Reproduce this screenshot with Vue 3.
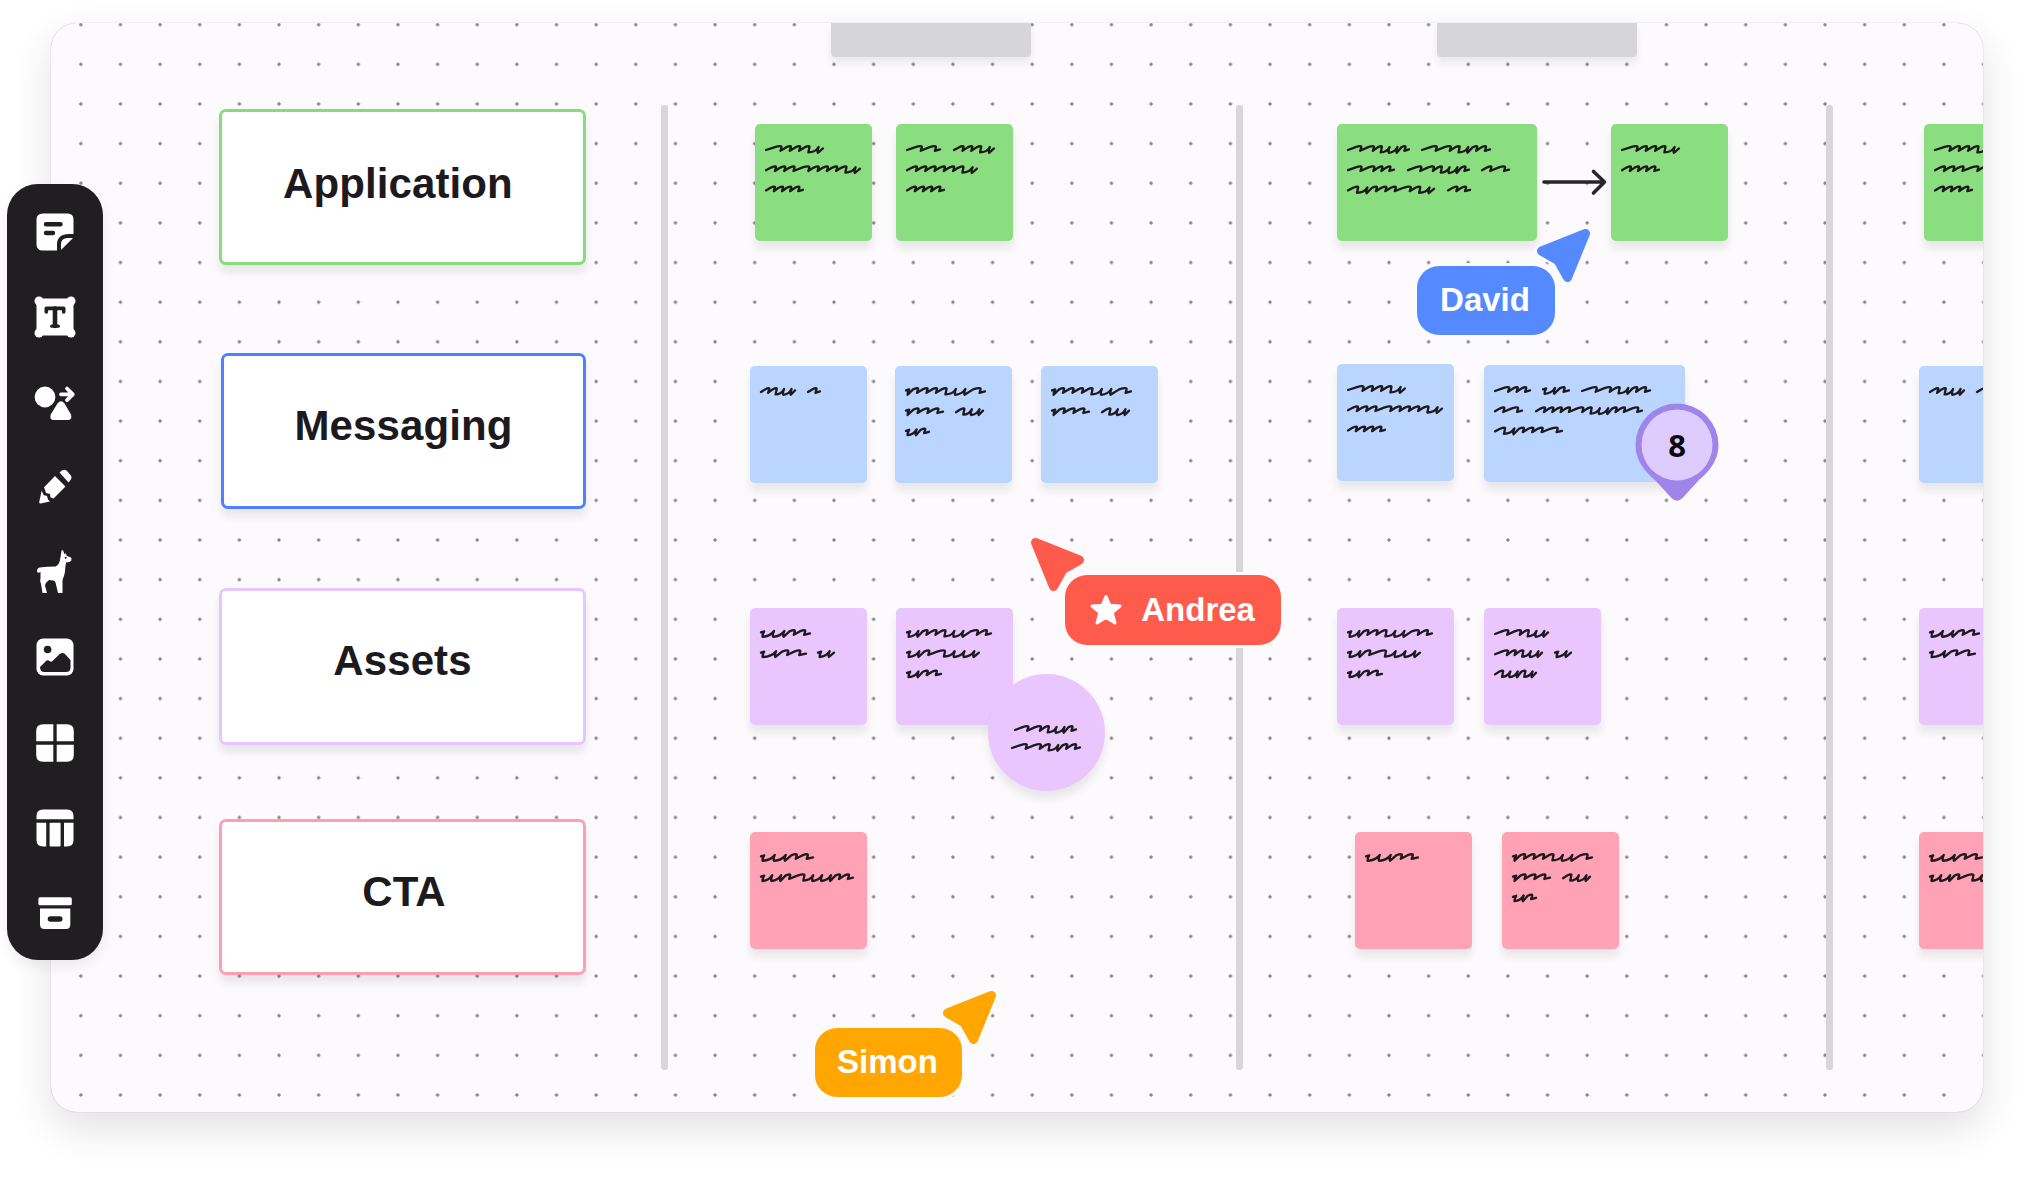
<template>
  <div class="page">
    <main class="board">
      <div class="dots"></div>

      <!-- column headers and separators -->
      <div v-for="x in tabs" :key="'t' + x" class="tab" :style="{ left: x + 'px' }"></div>
      <div v-for="x in lines" :key="'l' + x" class="line" :style="{ left: x + 'px' }"></div>

      <!-- row labels -->
      <div
        v-for="label in labels"
        :key="label.text"
        class="label"
        :class="label.color"
        :style="box(label)"
      >
        <span :style="{ transform: `translate(${label.dx}px, ${label.dy}px)` }">{{ label.text }}</span>
      </div>

      <!-- sticky notes -->
      <div
        v-for="(note, i) in notes"
        :key="'n' + i"
        class="note"
        :class="[note.color, { round: note.round }]"
        :style="box(note)"
      >
        <svg class="scribble" :width="note.w" height="117">
          <path v-for="(d, j) in scribbles(note)" :key="j" :d="d" />
        </svg>
      </div>

      <svg class="arrow" width="68" height="30" viewBox="0 0 68 30">
        <path d="M4 15H64M53.500 4.500L64.500 15L53.500 26" />
      </svg>

      <div class="pin">
        <svg width="84" height="100" viewBox="0 0 84 100">
          <path
            class="pin-body"
            d="M42 .5A41.500 41.500 0 0 0 .5 42C.5 56 8 67 20 77L36 94.500Q42 101 48 94.500L64 77C76 67 83.500 56 83.500 42A41.500 41.500 0 0 0 42 .5Z"
          />
          <circle class="pin-face" cx="42" cy="42" r="35.500" />
        </svg>
        <span>8</span>
      </div>

      <!-- collaborators -->
      <template v-for="user in users" :key="user.name">
        <svg
          class="cursor"
          :class="user.color"
          width="64"
          height="64"
          viewBox="0 0 64 64"
          :style="{ left: user.cx + 'px', top: user.cy + 'px' }"
        >
          <g :transform="user.flip ? 'translate(64 0) scale(-1 1)' : undefined">
            <path class="halo" :d="cursorPath" />
            <path :d="cursorPath" />
          </g>
        </svg>
        <div class="user" :class="user.color" :style="box(user)">
          <svg v-if="user.star" width="34" height="32" viewBox="0 0 34 32">
            <path
              d="M17 2.500L20.700 11.200L31 12L23.200 18.700L26 29L17 23.500L8 29L10.800 18.700L3 12L13.300 11.200Z"
            />
          </svg>
          {{ user.name }}
        </div>
      </template>
    </main>

    <nav class="toolbar">
      <!-- sticky note -->
      <svg viewBox="0 0 44 44">
        <path
          d="M10 3.500H34.500Q40.500 3.500 40.500 9.500V24H36C28 24 24 28 24 34V40.500H10Q3.500 40.500 3.500 34.500V9.500Q3.500 3.500 10 3.500Z"
        />
        <path d="M28 40V34.500Q28 28 34.500 28H40Z" />
        <path class="cut" d="M13 14.200H27.500M13 23H20" stroke-width="4.400" />
      </svg>
      <!-- text -->
      <svg viewBox="0 0 44 44">
        <rect x="3.500" y="3.500" width="37" height="37" />
        <circle cx="6" cy="6" r="4.500" />
        <circle cx="38" cy="6" r="4.500" />
        <circle cx="6" cy="38" r="4.500" />
        <circle cx="38" cy="38" r="4.500" />
        <path class="cut" d="M13.300 17V13.400H30.700V17" stroke-width="3.600" />
        <path class="cut" d="M22 13.500V31" stroke-width="4.600" />
        <path class="cut" d="M18.700 31.200H25.300" stroke-width="3.200" />
      </svg>
      <!-- shapes -->
      <svg viewBox="0 0 44 44">
        <circle cx="12" cy="17" r="10.400" />
        <path
          d="M24.500 23.500Q28 19 31.500 23.500L38 34.500Q39.500 40 34.500 40H21Q16.200 40 17.700 34.500Z"
        />
        <path class="stroke" d="M28 14.300H39.500M34 8.500L39.800 14.300L34 20.200" stroke-width="3.800" />
      </svg>
      <!-- pencil -->
      <svg viewBox="0 0 44 44">
        <path
          d="M26.500 7.500L29 5.500Q31.500 4 34 6L37.500 10Q39.500 12.500 37.500 15L35.500 17.500Z"
        />
        <path d="M22 11L32.500 21.500L20.500 33.500L17.500 32.500L17 29L13 28L11.500 23.500L10.800 22.500Z" />
        <path d="M8.700 25.500L10.500 30L14 31L15 34.500L17 36.500L7.500 38.500Q6 38.500 6.200 37Z" />
      </svg>
      <!-- llama -->
      <svg viewBox="0 0 44 44">
        <path
          d="M28.600 .5Q29.500 -.5 30.300 1L31.500 4.500L32.300 3L34 6L38 7.500Q39 8.500 38.300 10.500L36.500 12L33 12.500C32 17 32.500 22 31 26Q29.700 28.500 29.500 31V43H25L23 34.500Q22.500 31 20.500 30.500L16 30Q12.500 32.500 12 35.500L14 43H9.500L8 34Q6.500 31 7.500 28V22Q5 23.500 4.200 22Q3.300 19 6.500 17.500Q14 16.500 22.500 16.500Q26 15 27 10Z"
        />
        <circle class="hole" cx="32.700" cy="7.700" r="1" />
      </svg>
      <!-- image -->
      <svg viewBox="0 0 44 44">
        <rect x="3.500" y="3.500" width="37" height="37" rx="6.500" />
        <circle class="hole" cx="14.600" cy="14.500" r="3.800" />
        <path
          class="hole"
          d="M7 32L12.500 26.500Q14.500 24.500 16.500 26Q18 27.500 19.500 26L27 18.800Q29.500 17 32 19L37.500 25V32.500Q37.500 37 33 37H11.500Q7 37 7 32Z"
        />
      </svg>
      <!-- templates -->
      <svg viewBox="0 0 44 44">
        <path d="M10 3.200H20.300V20.300H3.200V10Q3.200 3.200 10 3.200Z" />
        <path d="M23.700 3.200H34Q40.800 3.200 40.800 10V20.300H23.700Z" />
        <path d="M3.200 23.700H20.300V40.800H10Q3.200 40.800 3.200 34Z" />
        <path d="M23.700 23.700H40.800V34Q40.800 40.800 34 40.800H23.700Z" />
      </svg>
      <!-- table -->
      <svg viewBox="0 0 44 44">
        <path d="M10 3.500H34Q40.500 3.500 40.500 10V13.300H3.500V10Q3.500 3.500 10 3.500Z" />
        <path d="M3.500 16.700H13.200V40.500H10Q3.500 40.500 3.500 34Z" />
        <rect x="16.600" y="16.700" width="11" height="23.800" rx="1" />
        <path d="M31 16.700H40.500V34Q40.500 40.500 34 40.500H31Z" />
      </svg>
      <!-- archive -->
      <svg viewBox="0 0 44 44">
        <rect x="5.400" y="6.200" width="33.400" height="8" rx="1.500" />
        <path d="M7 17.500H37.300V33.500Q37.300 38 33 38H11.500Q7 38 7 33.500Z" />
        <path class="cut" d="M17.500 28H26.700" stroke-width="5.600" />
      </svg>
    </nav>
  </div>
</template>

<script setup>
const tabs = [780, 1386.5];
const lines = [610.5, 1185.5, 1775.5];

const labels = [
  { text: "Application", color: "green", x: 219, y: 108.5, w: 367, h: 156.5, dx: -4.5, dy: -3 },
  { text: "Messaging", color: "blue", x: 221, y: 352.5, w: 365, h: 156.5, dx: 0, dy: -5 },
  { text: "Assets", color: "purple", x: 219, y: 588, w: 367, h: 156.5, dx: 0, dy: -5 },
  { text: "CTA", color: "pink", x: 219, y: 818.5, w: 367, h: 156.5, dx: 1.5, dy: -5.5 },
];

// handwriting: [start, width, teeth] per word, one array per line
const storyText = [[[0, 58, "nmmmu"]], [[0, 95, "mmmnmmmmu"]], [[0, 38, "mmmm"]]];
const priceText = [
  [[0, 80, "vmmmmuun"]],
  [[0, 38, "vmmm"], [50, 28, "muu"]],
  [[0, 24, "vum"]],
];
const shortText = [[[0, 35, "mmuu"], [47, 13, "m"]]];
const planText = [[[0, 50, "vuumm"]], [[0, 46, "vumm"], [57, 17, "vu"]]];
const assetText = [[[0, 85, "vummmuunm"]], [[0, 73, "vumnuuu"]], [[0, 35, "vumm"]]];
const ctaText = [[[0, 53, "vuumm"]], [[0, 93, "vuumnuuumm"]]];

const notes = [
  { color: "green", x: 754.5, y: 123.5, w: 117, text: storyText },
  {
    color: "green", x: 895.5, y: 123.5, w: 117,
    text: [[[0, 34, "nn"], [47, 41, "mmmu"]], [[0, 71, "mmmmmmu"]], [[0, 38, "mmmm"]]],
  },
  {
    color: "green", x: 1336.7, y: 123.5, w: 200.5,
    text: [
      [[0, 62, "nnmuum"], [74, 69, "nnmumm"]],
      [[0, 47, "nnmm"], [60, 62, "nnmuum"], [134, 28, "mn"]],
      [[0, 87, "mummmnmu"], [100, 23, "mm"]],
    ],
  },
  { color: "green", x: 1611, y: 123.5, w: 117, text: [[[0, 58, "nmmmu"]], [[0, 38, "mmmm"]]] },
  { color: "green", x: 1923.5, y: 123.5, w: 117, text: storyText },

  { color: "blue", x: 750, y: 366, w: 117, text: shortText },
  { color: "blue", x: 895, y: 366, w: 117, text: priceText },
  { color: "blue", x: 1041, y: 366, w: 117, text: priceText.slice(0, 2) },
  { color: "blue", x: 1336.7, y: 363.7, w: 117, text: storyText },
  {
    color: "blue", x: 1484.3, y: 364.7, w: 200.5,
    text: [
      [[0, 36, "nmm"], [48, 27, "vum"], [87, 69, "nnmumm"]],
      [[0, 28, "mn"], [41, 107, "mmmmnmuummn"]],
      [[0, 68, "mummmn"]],
    ],
  },
  { color: "blue", x: 1919, y: 366, w: 117, text: shortText },

  { color: "purple", x: 750, y: 608, w: 117, text: planText },
  { color: "purple", x: 895.5, y: 608, w: 117, text: assetText },
  {
    color: "purple", x: 988, y: 673.5, w: 117, round: true, left: 27, top: 55, step: 18,
    text: [[[0, 62, "nnmuum"]], [[-3, 69, "nnmumm"]]],
  },
  { color: "purple", x: 1336.7, y: 608, w: 117, text: assetText },
  {
    color: "purple", x: 1484.3, y: 608, w: 117,
    text: [[[0, 54, "nnmuu"]], [[0, 48, "nmmuu"], [60, 17, "vu"]], [[0, 42, "muumu"]]],
  },
  { color: "purple", x: 1919, y: 608, w: 117, text: planText },

  { color: "pink", x: 750, y: 832, w: 117, text: ctaText },
  { color: "pink", x: 1354.5, y: 832, w: 117, text: ctaText.slice(0, 1) },
  { color: "pink", x: 1502, y: 832, w: 117, text: priceText },
  { color: "pink", x: 1919, y: 832, w: 117, text: ctaText },
];

const users = [
  { name: "David", color: "blue", x: 1417, y: 265.5, w: 138, h: 69.5, cx: 1480, cy: 201, flip: true },
  { name: "Andrea", color: "red", x: 1065.3, y: 574.5, w: 215.7, h: 70, cx: 975, cy: 510, star: true },
  { name: "Simon", color: "orange", x: 815, y: 1027.5, w: 147, h: 69.5, cx: 886.5, cy: 962.5, flip: true },
];

const cursorPath = "M9.500 9.500L53.500 27L37 36.500L27.500 53.500Z";

// board content is stored in page coordinates
const box = ({ x, y, w, h = 117 }) => ({
  left: x - 50.5 + "px",
  top: y - 23 + "px",
  width: w + "px",
  height: h + "px",
});

// n: wide arch, m: short arch, u: low dip, v: leading hook
const toothWidth = { n: 12, m: 7.5, u: 7.5, v: 1.5 };

const drawWord = (x0, y, width, teeth) => {
  const chars = teeth.split("");
  const total = chars.reduce((sum, c) => sum + toothWidth[c], 0) + 4;
  const k = width / total;
  let x = x0;
  let d = `M${x} ${y + 1}`;
  chars.forEach((c, i) => {
    const w = toothWidth[c] * k;
    const r = x + w;
    if (c === "v") {
      d = `M${x} ${y - 0.6}L${x + 3.2} ${y - 1.6}Q${x + 1.2} ${y + 1.6} ${x + 1.6} ${y + 3.8}`;
    } else if (c === "u") {
      // shallow bowl followed by a steep upstroke
      d += `Q${x + w * 0.7} ${y + 3.4} ${r + 0.6} ${y - 2}`;
      d += `Q${r - 1.2} ${y + 1.6} ${r - 0.2} ${y + 3.8}`;
    } else {
      const low = chars[i + 1] === "u" ? 3.4 : 1.8;
      d += `L${x + w * 0.55} ${y - 1.6}Q${r + 1.6} ${y - 4.2} ${r + 0.6} ${y - 1.4}`;
      d += `L${r - 0.4} ${y + low}`;
    }
    x = r;
  });
  const last = chars[chars.length - 1];
  return d + `L${x0 + width} ${y + (last === "u" ? -0.6 : 0.4)}`;
};

const scribbles = ({ text, left = 11, top = 25, step = 20.2 }) =>
  text.flatMap((words, row) =>
    words.map(([x, w, teeth]) => drawWord(left + x, top + row * step, w - 1, teeth))
  );
</script>

<style>
body {
  background: #fff;
  overflow: hidden;
}
</style>

<style scoped>
.page {
  position: relative;
  box-sizing: border-box;
  width: 2032px;
  height: 1184px;
  padding: 23px 0 0 50.5px;
  overflow: hidden;
  background: #fff;
  font-family: "Liberation Sans", Arial, sans-serif;
}

.board {
  position: relative;
  width: 1932.5px;
  height: 1088.5px;
  border-radius: 26px;
  background: #fcfafd;
  box-shadow: 0 0 1px rgba(0, 0, 0, 0.35), 0 16px 40px rgba(0, 0, 0, 0.12);
  overflow: hidden;
}

.dots {
  position: absolute;
  inset: 0;
  background-image: radial-gradient(circle, #858387 1.2px, transparent 2.1px);
  background-size: 39.65px 39.65px;
  background-position: 10px 21.5px;
}

.tab {
  position: absolute;
  top: 0;
  width: 200px;
  height: 34px;
  border-radius: 0 0 4px 4px;
  background: #d6d5d7;
  box-shadow: 0 6px 8px rgba(0, 0, 0, 0.07);
}

.line {
  position: absolute;
  top: 82px;
  width: 7px;
  height: 965px;
  border-radius: 3px;
  background: #d7d6d8;
}

.label {
  position: absolute;
  box-sizing: border-box;
  display: flex;
  align-items: center;
  justify-content: center;
  border: 3px solid;
  border-radius: 7px;
  background: #fff;
  box-shadow: 0 8px 9px rgba(0, 0, 0, 0.08);
  font-size: 42px;
  font-weight: 700;
  letter-spacing: 0.1px;
}

.label span {
  color: #1c1a1e;
}

.label.green {
  border-color: #86dc7b;
}

.label.blue {
  border-color: #4f80ff;
}

.label.purple {
  border-color: #e7c5ff;
}

.label.pink {
  border-color: #ff9eb2;
}

.note {
  position: absolute;
  border-radius: 5px;
  box-shadow: 0 8px 9px rgba(0, 0, 0, 0.08);
}

.note.round {
  border-radius: 50%;
}

.note.green {
  background: #8bde7f;
}

.note.blue {
  background: #bad5ff;
}

.note.purple {
  background: #eac6ff;
}

.note.pink {
  background: #ffa2b5;
}

.scribble {
  display: block;
}

.scribble path {
  fill: none;
  stroke: #1e191c;
  stroke-width: 2.3;
  stroke-linecap: round;
  stroke-linejoin: round;
}

.arrow {
  position: absolute;
  left: 1489.5px;
  top: 143.5px;
  fill: none;
  stroke: #29262b;
  stroke-width: 3.6;
  stroke-linecap: round;
  stroke-linejoin: round;
}

.pin {
  position: absolute;
  left: 1584.5px;
  top: 380px;
  width: 84px;
  height: 100px;
}

.pin-body {
  fill: #9f84ea;
}

.pin-face {
  fill: #dfccff;
}

.pin span {
  position: absolute;
  top: 0;
  left: 0;
  width: 84px;
  line-height: 84px;
  text-align: center;
  font-family: "Noto Sans", sans-serif;
  font-size: 31px;
  font-weight: 700;
  color: #0a080c;
}

.cursor {
  position: absolute;
  stroke-width: 9;
  stroke-linejoin: round;
}

.cursor.blue {
  fill: #5589ff;
  stroke: #5589ff;
}

.cursor.red {
  fill: #ff5b4c;
  stroke: #ff5b4c;
}

.cursor.orange {
  fill: #ffa700;
  stroke: #ffa700;
}

.cursor .halo {
  stroke: #fcfafd;
  stroke-width: 14;
}

.user {
  position: absolute;
  display: flex;
  align-items: center;
  justify-content: center;
  gap: 18px;
  box-sizing: border-box;
  padding: 0 2px 0 0;
  border-radius: 22px;
  box-shadow: 0 0 0 3px #fcfafd;
  color: #fff;
  font-size: 33px;
  font-weight: 700;
}

.user svg {
  fill: #fff;
  stroke: #fff;
  stroke-width: 3;
  stroke-linejoin: round;
}

.user.blue {
  background: #5589ff;
}

.user.red {
  background: #ff5b4c;
}

.user.orange {
  background: #ffa700;
}

.toolbar {
  position: absolute;
  left: 7px;
  top: 184px;
  box-sizing: border-box;
  display: flex;
  flex-direction: column;
  align-items: center;
  gap: 41.1px;
  width: 96px;
  height: 776px;
  padding-top: 26px;
  border-radius: 31px;
  background: #201e21;
  box-shadow: 0 6px 14px rgba(0, 0, 0, 0.07);
}

.toolbar svg {
  flex: none;
  width: 44px;
  height: 44px;
  fill: #fff;
  overflow: visible;
}

.toolbar .cut,
.toolbar .stroke {
  fill: none;
  stroke: #201e21;
  stroke-linecap: round;
  stroke-linejoin: round;
}

.toolbar .stroke {
  stroke: #fff;
}

.toolbar .hole {
  fill: #201e21;
}
</style>
